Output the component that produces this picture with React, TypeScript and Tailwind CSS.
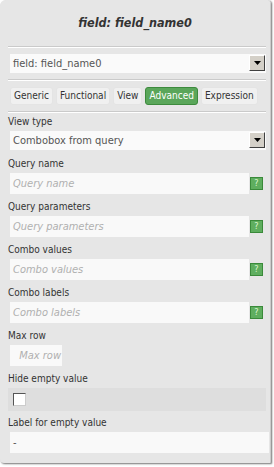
import React from "react";

const font = { fontFamily: '"DejaVu Sans Condensed", "DejaVu Sans", Tahoma, sans-serif' };

function DropBtn() {
  return (
    <div className="absolute right-[1px] top-[1px] w-[16px] h-[16px] bg-[#d4d0c8] border border-t-white border-l-white border-r-[#404040] border-b-[#404040] flex items-center justify-center">
      <svg width="7" height="4" viewBox="0 0 7 4">
        <path d="M0 0 H7 L3.5 4 Z" fill="#000" />
      </svg>
    </div>
  );
}

function Select({ value }: { value: string }) {
  return (
    <div className="relative ml-[2px] w-[256px] h-[19px] bg-[#fafafa] text-[#555] text-[11px] leading-[19px] pl-[3px]">
      {value}
      <DropBtn />
    </div>
  );
}

function Help() {
  return (
    <div className="w-[13px] h-[13px] bg-[#5fae5f] border border-[#3a8a3a] flex items-center justify-center text-[9px] leading-none text-[#dff5cf] shrink-0">
      ?
    </div>
  );
}

function Label({ children }: { children: React.ReactNode }) {
  return <div className="h-[14px] leading-[14px] text-[10px] text-[#333] mb-[2px]">{children}</div>;
}

function TextField({ label, ph }: { label: string; ph: string }) {
  return (
    <div className="mb-[6px]">
      <Label>{label}</Label>
      <div className="flex items-center">
        <div className="ml-[2px] w-[239px] h-[21px] bg-[#f9f9f9] text-[11px] leading-[21px] pl-[3px] italic text-[#b0b0b0]">
          {ph}
        </div>
        <div className="ml-[1px]">
          <Help />
        </div>
      </div>
    </div>
  );
}

function Sep() {
  return <div className="w-[258px] h-[2px] border-t border-[#cacaca] border-b border-b-white" />;
}

function Tab({ t, active }: { t: string; active?: boolean }) {
  return (
    <div
      className={
        active
          ? "h-[18px] px-[3px] rounded-[3px] bg-[#5aa65a] border border-[#3d8a3d] text-white text-[10px] leading-[16px]"
          : "h-[18px] px-[3px] rounded-[3px] bg-[#f0f0f0] border border-[#e4e4e4] text-[#333] text-[10px] leading-[16px]"
      }
    >
      {t}
    </div>
  );
}

export default function App() {
  return (
    <div className="w-[274px] h-[467px] bg-white" style={font}>
      <div className="w-[271px] h-[463px] bg-[#e6e6e6] rounded-tl-[6px] rounded-tr-[3px] rounded-bl-[4px] shadow-[1px_1px_2px_rgba(0,0,0,0.55)] border-r border-dotted border-r-[#b0b0b0] pl-[8px]">
        <div className="h-[46px] flex items-center justify-center pr-[8px] pt-[1px] text-[12.5px] font-bold italic text-[#333]">
          field: field_name0
        </div>
        <Sep />
        <div className="mt-[6px]">
          <Select value="field: field_name0" />
        </div>
        <div className="mt-[6px]">
          <Sep />
        </div>
        <div className="mt-[6px] ml-[2px] flex gap-[3px]">
          <Tab t="Generic" />
          <Tab t="Functional" />
          <Tab t="View" />
          <Tab t="Advanced" active />
          <Tab t="Expression" />
        </div>
        <div className="mt-[6px]">
          <Sep />
        </div>
        <div className="mt-[2px]">
          <Label>View type</Label>
          <Select value="Combobox from query" />
        </div>
        <div className="mt-[7px]">
          <TextField label="Query name" ph="Query name" />
          <TextField label="Query parameters" ph="Query parameters" />
          <TextField label="Combo values" ph="Combo values" />
          <TextField label="Combo labels" ph="Combo labels" />
          <div className="mb-[6px]">
            <Label>Max row</Label>
            <div className="ml-[2px] w-[52px] h-[21px] bg-[#f9f9f9] text-[11px] leading-[21px] pr-[1px] text-right italic text-[#b0b0b0]">
              Max row
            </div>
          </div>
          <div className="mb-[5px]">
            <Label>Hide empty value</Label>
            <div className="w-[258px] h-[23px] bg-[#dedede] flex items-center pl-[5px]">
              <div className="w-[13px] h-[13px] bg-white border border-t-[#555] border-l-[#555] border-r-[#ccc] border-b-[#ccc]" />
            </div>
          </div>
          <div>
            <Label>Label for empty value</Label>
            <div className="ml-[2px] w-[259px] h-[21px] bg-[#f9f9f9] text-[11px] leading-[21px] pl-[3px] text-[#555]">
              -
            </div>
          </div>
        </div>
      </div>
    </div>
  );
}
